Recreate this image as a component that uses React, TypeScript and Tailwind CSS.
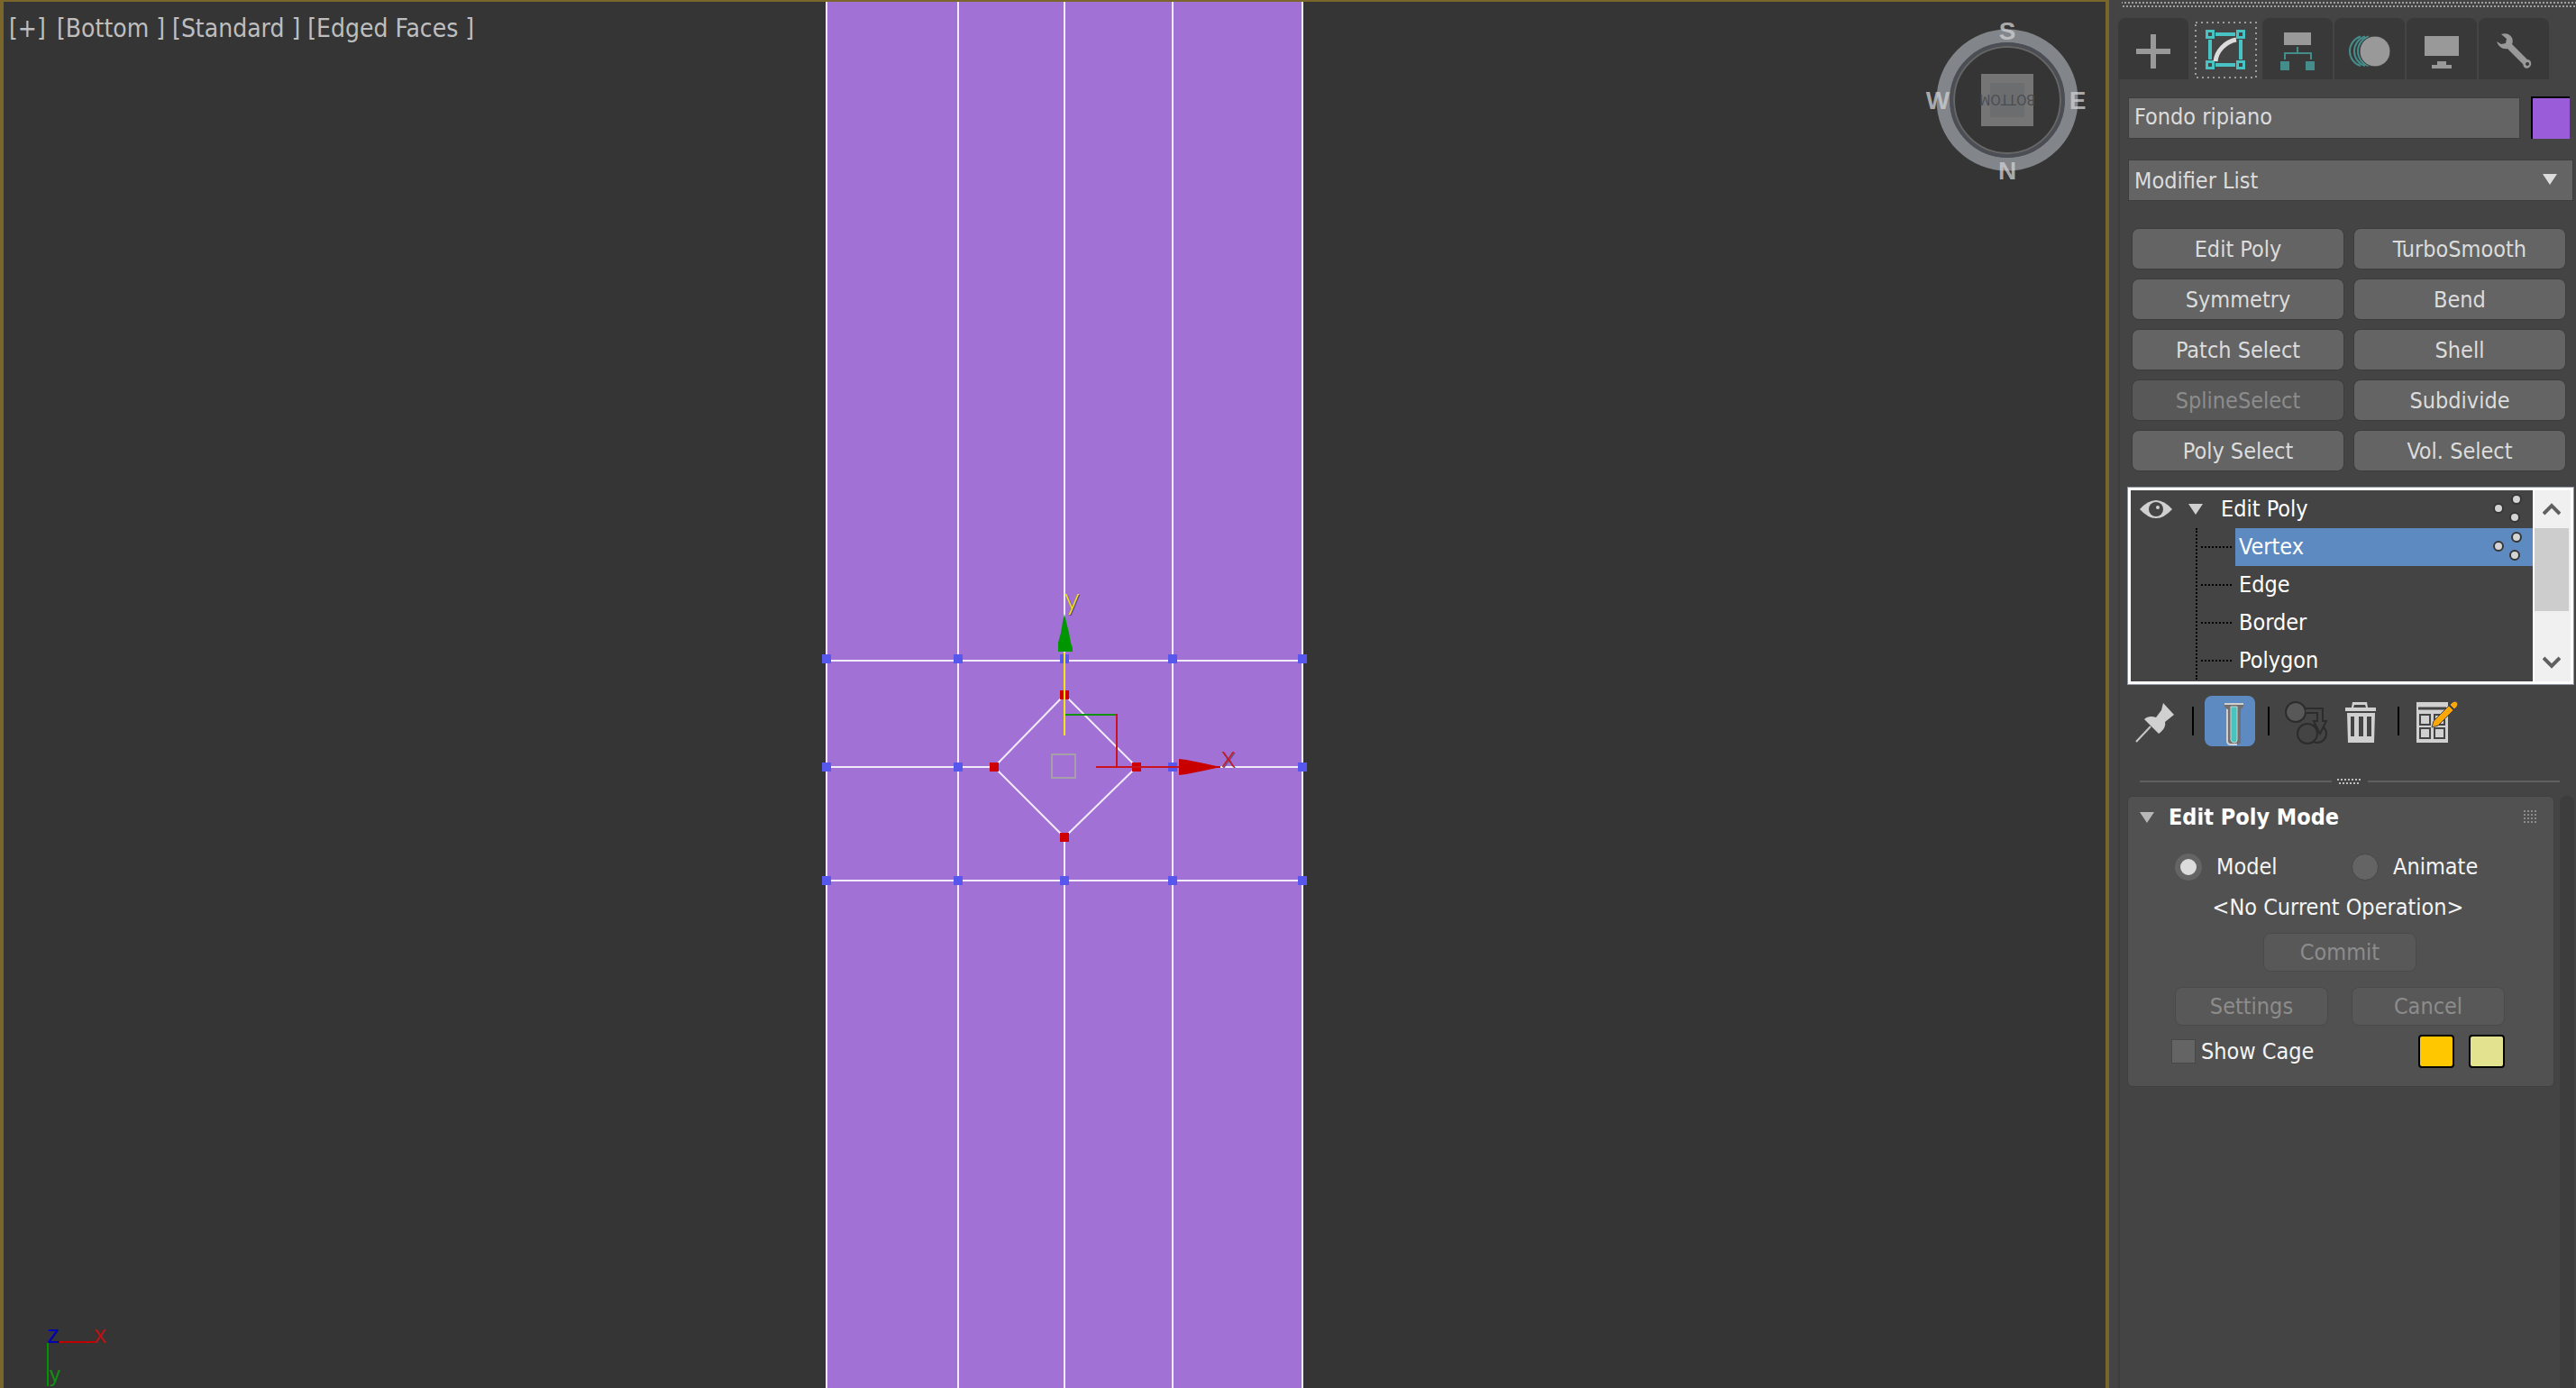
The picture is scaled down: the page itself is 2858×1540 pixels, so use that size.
import { useState, type ReactNode } from "react";

const tabs: { name: string; icon: ReactNode }[] = [
  {
    name: "Create",
    icon: <path d="M20 34h16V18h6v16h16v6H42v16h-6V40H20z" fill="#999" />,
  },
  {
    name: "Modify",
    icon: (
      <g fill="none">
        <rect x="6" y="5" width="67" height="61" stroke="#9c9c9c" strokeWidth="2" strokeDasharray="2 4" />
        <g stroke="#48c3c3" strokeWidth="4">
          <path d="M28 18h22M28 52h22M22 24v22M56 24v22" />
          <g strokeWidth="3">
            <rect x="18.5" y="14.5" width="7" height="7" />
            <rect x="52.5" y="14.5" width="7" height="7" />
            <rect x="18.5" y="48.5" width="7" height="7" />
            <rect x="52.5" y="48.5" width="7" height="7" />
          </g>
        </g>
        <path d="M28 48C29 37 39 26 51 24" stroke="#dcdcdc" strokeWidth="5" />
      </g>
    ),
  },
  {
    name: "Hierarchy",
    icon: (
      <g>
        <path d="M24 16h30v14H24z" fill="#999" />
        <path d="M39 32v8M25 46v-7h29v7" fill="none" stroke="#458d8b" strokeWidth="2" />
        <path d="M20 48h10v10H20zM48 48h10v10H48z" fill="#458d8b" />
      </g>
    ),
  },
  {
    name: "Motion",
    icon: (
      <g>
        <g fill="none" stroke="#458d8b" strokeWidth="2">
          <path d="M29 20.500A17 17 0 0 0 29 53" />
          <path d="M34 20.500A17 17 0 0 0 34 53" />
          <path d="M38 20.500A17 17 0 0 0 38 53" />
        </g>
        <circle cx="45" cy="37" r="17" fill="#999" stroke="#3a3a3a" strokeWidth="1" />
      </g>
    ),
  },
  {
    name: "Display",
    icon: <path d="M20 20h38v22H20zM34 48h10v4h6v4H28v-4h6z" fill="#999" />,
  },
  {
    name: "Utilities",
    icon: (
      <path
        fill="#999"
        fillRule="evenodd"
        d="M25 18c5-2 10 0 12 4 1 3 1 5 0 7l17 17c3 0 5 3 4 6-1 4-6 5-8 2l-1-3-17-17c-5 1-10-2-12-8l5 3 5-1 1-5zM54 49a2 2 0 1 0 .1 0z"
      />
    ),
  },
];

const modifiers = [
  "Edit Poly",
  "TurboSmooth",
  "Symmetry",
  "Bend",
  "Patch Select",
  "Shell",
  "SplineSelect",
  "Subdivide",
  "Poly Select",
  "Vol. Select",
];

const levels = ["Vertex", "Edge", "Border", "Polygon"];

function Panel() {
  const [tab, setTab] = useState("Modify");
  const [level, setLevel] = useState("Vertex");
  const [mode, setMode] = useState("Model");

  return (
    <aside className="flex w-[518px] shrink-0 flex-col bg-[#444] pl-[10px]">
      <svg className="h-2 w-full" aria-hidden="true">
        <defs>
          <pattern id="grip" width="4" height="8" patternUnits="userSpaceOnUse">
            <path d="M3 2h1v2h-1zM0 2h1v2h-1zM1 6h2v2h-2z" fill="#a0a0a0" />
          </pattern>
        </defs>
        <rect x="4" width="100%" height="8" fill="url(#grip)" />
      </svg>

      <div role="tablist" className="mt-3 flex gap-[2px]">
        {tabs.map((t) => (
          <button
            key={t.name}
            role="tab"
            aria-label={t.name}
            aria-selected={tab === t.name}
            onClick={() => setTab(t.name)}
            className={`h-[68px] w-[78px] rounded-t-lg ${tab === t.name ? "bg-[#444]" : "bg-[#393939]"}`}
          >
            <svg viewBox="0 0 78 68" className="h-[68px] w-[78px]" aria-hidden="true">
              {t.icon}
            </svg>
          </button>
        ))}
      </div>

      <div className="flex grow flex-col border-l-2 border-[#3d3d3d] pr-[2px] pl-2">
        <div className="mt-[19px] flex items-center justify-between pr-[5px] pl-[1px]">
          <input
            aria-label="Object name"
            defaultValue="Fondo ripiano"
            className="h-[46px] w-[435px] border border-[#3d3d3d] bg-[#646464] px-[6px] pb-[2px] text-[#dcdcdc] outline-none"
          />
          <button
            aria-label="Object color"
            className="h-[47px] w-[43px] border-t-2 border-l-2 border-black bg-[#9b5cd9]"
          />
        </div>

        <div className="relative mx-[1px] mt-[23px]">
          <select
            aria-label="Modifier List"
            className="h-[46px] w-full appearance-none border border-[#3d3d3d] bg-[#646464] px-[6px] pt-[2px] text-[#dcdcdc] outline-none"
          >
            <option>Modifier List</option>
          </select>
          <svg viewBox="0 0 16 12" className="pointer-events-none absolute top-4 right-[18px] h-3 w-4" aria-hidden="true">
            <path d="M0 0h16L8 12z" fill="#dcdcdc" />
          </svg>
        </div>

        <div className="mt-[30px] mr-[9px] ml-[5px] grid grid-cols-2 gap-[10px]">
          {modifiers.map((m) => (
            <button
              key={m}
              disabled={m === "SplineSelect"}
              className="h-[46px] rounded-lg border border-[#3d3d3d] bg-[#646464] pt-[2px] text-[#dcdcdc] disabled:bg-[#585858] disabled:text-[#8c8c8c]"
            >
              {m}
            </button>
          ))}
        </div>

        <div className="mt-[17px] flex h-[220px] border border-[#8d939e] bg-white p-[3px]">
          <div role="tree" aria-label="Modifier stack" className="relative min-w-0 grow overflow-hidden bg-[#444] text-white">
            <div className="flex h-[42px] items-center">
              <svg viewBox="0 0 36 20" className="ml-[10px] h-5 w-9" aria-hidden="true">
                <path d="M0 10Q18-10 36 10Q18 30 0 10z" fill="#d0d0d0" />
                <circle cx="18" cy="10" r="8" fill="#444" />
                <circle cx="20" cy="8" r="2" fill="#d0d0d0" />
              </svg>
              <svg viewBox="0 0 16 12" className="ml-[18px] h-3 w-4" aria-hidden="true">
                <path d="M0 0h16L8 12z" fill="#d0d0d0" />
              </svg>
              <button role="treeitem" className="ml-5 flex grow items-center justify-between pr-[11px] text-left">
                Edit Poly
                <VertexDots />
              </button>
            </div>
            <div className="ml-[72px] border-l-2 border-dotted border-black">
              {levels.map((l) => (
                <div key={l} className="flex h-[42px] items-center">
                  <span className="mr-1 ml-1 w-[34px] border-t-2 border-dotted border-black" />
                  <button
                    role="treeitem"
                    aria-selected={level === l}
                    onClick={() => setLevel(l)}
                    className={`flex h-full grow items-center justify-between pr-[11px] pl-1 text-left ${level === l ? "bg-[#5e8ac2]" : ""}`}
                  >
                    {l}
                    {level === l && <VertexDots />}
                  </button>
                </div>
              ))}
            </div>
          </div>
          <div className="ml-[2px] flex w-10 flex-col bg-[#f0f0f0]">
            <button aria-label="Scroll up" className="flex h-[42px] w-[38px] items-center justify-center">
              <svg viewBox="0 0 20 16" className="h-4 w-5" aria-hidden="true">
                <path d="M1 13l9-9 9 9" fill="none" stroke="#606060" strokeWidth="4" />
              </svg>
            </button>
            <div className="h-[92px] w-[38px] bg-[#cdcdcd]" />
            <button aria-label="Scroll down" className="mt-auto flex h-[42px] w-[38px] items-center justify-center">
              <svg viewBox="0 0 20 16" className="h-4 w-5" aria-hidden="true">
                <path d="M1 3l9 9 9-9" fill="none" stroke="#606060" strokeWidth="4" />
              </svg>
            </button>
          </div>
        </div>

        <div className="mt-3 flex items-center pl-[2px]">
          <ToolButton label="Pin stack">
            <path d="M8 51l16-17" stroke="#c8c8c8" strokeWidth="2" />
            <path d="M38 8L50 21 40 29C41 33 39 38 33 42L17 26C20 23 25 22 30 24L36 16z" fill="#d0d0d0" />
          </ToolButton>
          <Separator />
          <ToolButton label="Show end result" active>
            <path d="M25 12h15v38q0 4-4 4h-7q-4 0-4-4z" fill="#707070" />
            <path d="M25 12v38q0 4 4 4h7" stroke="#d0d0d0" strokeWidth="2" />
            <path d="M22 8h21v4l-3 3H25l-3-3z" fill="#707070" />
            <path d="M22 9h21" stroke="#d0d0d0" strokeWidth="2" />
            <path d="M29 12h7v37q0 3-3 3t-4-3z" fill="#48c3bd" stroke="#d0d0d0" strokeWidth="1" />
          </ToolButton>
          <Separator />
          <ToolButton label="Make unique">
            <g stroke="#2c2c2c" strokeWidth="2">
              <circle cx="17" cy="18" r="11" fill="#585858" />
              <circle cx="41" cy="42" r="10" fill="#444" />
              <circle cx="30" cy="42" r="11" fill="#444" />
              <path d="M28 14h19v14h4l-7 14-7-14h4v-9H28" fill="#444" />
            </g>
          </ToolButton>
          <div className="w-1" />
          <ToolButton label="Remove modifier">
            <path d="M12 13h7l1-6h16l1 6h9v4H12zM22 10l-1 3h14l-1-3z" fill="#d0d0d0" fillRule="evenodd" />
            <path d="M14 19h31l-1 33H15zM18 23v22h4V23zM27 23v22h5V23zM36 23v22h5V23z" fill="#d0d0d0" fillRule="evenodd" />
          </ToolButton>
          <Separator />
          <ToolButton label="Configure modifier sets">
            <path d="M7 7h35v45H7z" fill="#d0d0d0" />
            <path d="M9 14h31" stroke="#444" strokeWidth="3" />
            <g fill="#d0d0d0" stroke="#444" strokeWidth="2">
              <rect x="11" y="21" width="11" height="11" />
              <rect x="27" y="21" width="11" height="11" />
              <rect x="11" y="36" width="11" height="11" />
              <rect x="27" y="36" width="11" height="11" />
            </g>
            <path d="M24 35l2-7 17-17 5 5-17 17zM44 10l3-3q3-2 5 0t0 5l-3 3z" fill="#fca708" stroke="#444" strokeWidth="1" />
          </ToolButton>
        </div>

        <div className="mt-[35px] flex h-2 items-center pr-4 pl-[14px]">
          <span className="h-[2px] grow bg-[#5f5f5f]" />
          <svg viewBox="0 0 40 8" className="h-2 w-10" aria-hidden="true">
            <path d="M6 2h28" stroke="#c0c0c0" strokeWidth="2" strokeDasharray="2 2" />
            <path d="M8 6h24" stroke="#c0c0c0" strokeWidth="2" strokeDasharray="2 2" />
          </svg>
          <span className="h-[2px] grow bg-[#5f5f5f]" />
        </div>

        <div className="mt-3 flex grow items-start justify-between">
          <section className="w-[474px] rounded-md border border-[#3f3f3f] bg-[#515151] pb-5 text-[#f4f4f4]">
            <div className="flex h-[46px] items-center pr-[18px] pl-[13px]">
              <svg viewBox="0 0 16 12" className="h-3 w-4" aria-hidden="true">
                <path d="M0 0h16L8 12z" fill="#b8b8b8" />
              </svg>
              <h2 className="ml-4 grow font-bold text-white">Edit Poly Mode</h2>
              <svg viewBox="0 0 16 16" className="h-4 w-4" aria-hidden="true">
                <path d="M1 1h14M1 5h14M1 9h14M1 13h14" stroke="#8c8c8c" strokeWidth="2" strokeDasharray="2 2" />
              </svg>
            </div>
            <div className="mt-4 ml-[52px] flex">
              {["Model", "Animate"].map((m) => (
                <label key={m} className="flex h-8 w-[196px] items-center gap-4">
                  <input
                    type="radio"
                    name="mode"
                    checked={mode === m}
                    onChange={() => setMode(m)}
                    className="h-[30px] w-[30px] appearance-none rounded-full border border-[#484848] bg-[#646464] checked:border-[6px] checked:border-[#646464] checked:bg-[#dcdcdc]"
                  />
                  {m}
                </label>
              ))}
            </div>
            <p className="mt-[13px] pr-[6px] text-center leading-8">&lt;No Current Operation&gt;</p>
            <div className="mt-3 ml-[52px] grid w-[366px] grid-cols-[170px_170px] gap-x-[26px] gap-y-[17px]">
              <PanelButton className="col-span-2 mx-auto">Commit</PanelButton>
              <PanelButton>Settings</PanelButton>
              <PanelButton>Cancel</PanelButton>
            </div>
            <div className="mt-[10px] ml-[48px] flex items-center">
              <label className="flex grow items-center gap-[6px]">
                <input
                  type="checkbox"
                  className="h-[27px] w-[27px] appearance-none border border-[#484848] bg-[#646464] checked:bg-[#dcdcdc]"
                />
                Show Cage
              </label>
              <button aria-label="Cage color" className="h-[37px] w-10 rounded-sm border-2 border-black bg-[#ffc700]" />
              <button
                aria-label="Selected cage color"
                className="mr-[54px] ml-4 h-[37px] w-10 rounded-sm border-2 border-black bg-[#e3e38f]"
              />
            </div>
          </section>
          <div className="h-full w-4 rounded-t-lg bg-[#3d3d3d]" />
        </div>
      </div>
    </aside>
  );
}

function VertexDots() {
  return (
    <svg viewBox="0 0 34 34" className="h-[34px] w-[34px]" aria-hidden="true">
      <g fill="#d4d4d4" stroke="#363636" strokeWidth="2">
        <circle cx="27" cy="6" r="5" />
        <circle cx="7" cy="16" r="5" />
        <circle cx="25" cy="26" r="5" />
      </g>
    </svg>
  );
}

function ToolButton({ label, active, children }: { label: string; active?: boolean; children: ReactNode }) {
  return (
    <button aria-label={label} className={`h-14 w-14 rounded-lg ${active ? "bg-[#5e8ac2]" : ""}`}>
      <svg viewBox="0 0 56 56" className="h-14 w-14" fill="none" aria-hidden="true">
        {children}
      </svg>
    </button>
  );
}

function Separator() {
  return <div className="mr-3 ml-[14px] h-8 w-[2px] bg-black" />;
}

function PanelButton({ className = "", children }: { className?: string; children: ReactNode }) {
  return (
    <button disabled className={`h-[43px] w-[170px] rounded-lg border border-[#4a4a4a] bg-[#585858] text-[#8c8c8c] ${className}`}>
      {children}
    </button>
  );
}

const blueVertices = [731, 851, 977].flatMap((y) =>
  [917, 1063, 1181, 1301, 1445].filter((x) => !(x === 1181 && y === 851)).map((x) => [x, y]),
);
const redVertices = [
  [1181, 771],
  [1103, 851],
  [1261, 851],
  [1181, 929],
];

function Viewport() {
  return (
    <main className="relative min-w-0 grow border-x-4 border-t-2 border-[#7a652a] bg-[#353535]">
      <svg
        viewBox="4 2 2332 1538"
        preserveAspectRatio="xMidYMid slice"
        className="absolute inset-0 h-full w-full font-['Liberation_Sans',sans-serif]"
        role="img"
        aria-label="Bottom view of the model"
      >
        <rect x="917" y="0" width="528" height="1540" fill="#a271d6" />
        <g stroke="#f1eaf8" strokeWidth="2" fill="none">
          <path d="M917 0v1540M1063 0v1540M1181 0v771M1181 929v611M1301 0v1540M1445 0v1540" />
          <path d="M917 733h528M917 851h186M1261 851h184M917 977h528" />
          <path d="M1181 771l-78 80 78 78 80-78z" />
        </g>
        {blueVertices.map(([x, y]) => (
          <rect key={`${x}-${y}`} x={x - 5} y={y - 5} width="10" height="10" fill="#5757ee" />
        ))}
        {redVertices.map(([x, y]) => (
          <rect key={`${x}-${y}`} x={x - 5} y={y - 5} width="10" height="10" fill="#d00000" />
        ))}
        <rect x="1167" y="837" width="26" height="26" fill="none" stroke="#a5a0a8" strokeWidth="2" />
        <path d="M1182 793h57" stroke="#0f930f" strokeWidth="2" />
        <path d="M1239 792v59M1216 851h138" stroke="#c8141e" strokeWidth="2" />
        <path d="M1308 842l8 1 20 4 18 4-18 4-20 4-8 1z" fill="#c80000" />
        <path d="M1174 723v-10l3-11 2-12 2-9 2 9 3 12 2 11 2 6v4z" fill="#009600" />
        <path d="M1181 724v92" stroke="#f5e614" strokeWidth="2" />
        <g fontSize="33" fontWeight="300" className="font-['Lato','Liberation_Sans',sans-serif]">
          <text x="1182" y="677" fill="#4a4a4a">y</text>
          <text x="1181" y="676" fill="#f5e614">y</text>
          <text x="1356" y="852" fill="#5a5060">x</text>
          <text x="1355" y="851" fill="#c8141e">x</text>
        </g>

        <g fill="none">
          <circle cx="2227" cy="111" r="71" stroke="#82868b" strokeWidth="15" />
          <circle cx="2227" cy="111" r="62" stroke="#4b4e55" strokeWidth="4" />
          <circle cx="2227" cy="111" r="59" stroke="#666" strokeWidth="2" />
        </g>
        <rect x="2198" y="82" width="58" height="58" fill="#757575" />
        <rect x="2208" y="92" width="38" height="38" fill="#6b6d6f" />
        <text
          x="2227"
          y="117"
          transform="rotate(180 2227 111)"
          textAnchor="middle"
          fontSize="16"
          fill="#4a4d52"
          className="font-['Liberation_Sans_Narrow','DejaVu_Sans_Condensed',sans-serif]"
        >
          BOTTOM
        </text>
        <g fontSize="28" fontWeight="bold" fill="#d0d0d2" fillOpacity="0.75" textAnchor="middle">
          <text x="2227" y="44">S</text>
          <text x="2227" y="199">N</text>
          <text x="2150" y="121">W</text>
          <text x="2305" y="121">E</text>
        </g>

        <g strokeWidth="2">
          <path d="M64 1489h41" stroke="#c00000" />
          <path d="M53 1490v48" stroke="#009600" />
        </g>
        <g fontSize="28">
          <text x="52" y="1490" fill="#0000b4">z</text>
          <text x="104" y="1490" fill="#b41414">x</text>
          <text x="55" y="1533" fontSize="24" fill="#148c14">y</text>
        </g>
      </svg>
      <nav className="relative flex gap-2 pt-[14px] pl-[6px] text-[28px] text-[#bebebe]">
        {["[+]", "[Bottom ]", "[Standard ]", "[Edged Faces ]"].map((m) => (
          <button key={m} className="min-w-[45px] text-left">{m}</button>
        ))}
      </nav>
    </main>
  );
}

export default function App() {
  return (
    <div className="flex min-h-screen bg-[#444] font-['DejaVu_Sans_Condensed','DejaVu_Sans',sans-serif] text-[25px] leading-8 font-normal">
      <Viewport />
      <Panel />
    </div>
  );
}
